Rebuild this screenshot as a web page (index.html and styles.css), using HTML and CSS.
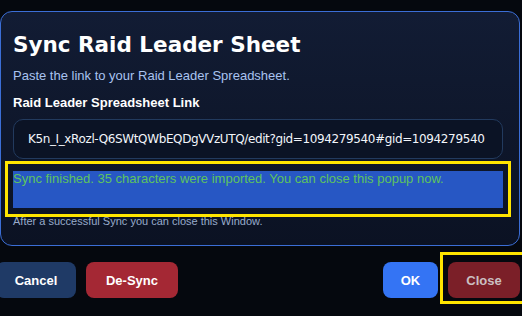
FILE: index.html
```html
<!DOCTYPE html>
<html>
<head>
<meta charset="utf-8">
<link rel="stylesheet" href="styles.css">
</head>
<body>
<div class="panel">
  <h1 class="title">Sync Raid Leader Sheet</h1>
  <p class="subtitle">Paste the link to your Raid Leader Spreadsheet.</p>
  <div class="label">Raid Leader Spreadsheet Link</div>
  <div class="input"><span class="input-text">K5n_I_xRozl-Q6SWtQWbEQDgVVzUTQ/edit?gid=1094279540#gid=1094279540</span></div>
  <div class="status hl">Sync finished. 35 characters were imported. You can close this popup now.</div>
  <div class="hint">After a successful Sync you can close this Window.</div>
</div>
<div class="actions">
  <div class="group">
    <button class="btn cancel">Cancel</button>
    <button class="btn desync">De-Sync</button>
  </div>
  <div class="group">
    <button class="btn ok">OK</button>
    <button class="btn close hl hl-close">Close</button>
  </div>
</div>
</body>
</html>
```
FILE: styles.css
```css
html, body {
  margin: 0;
  padding: 0;
  background: #05080e;
  width: 522px;
  height: 316px;
  overflow: hidden;
  font-family: "Liberation Sans", Arial, sans-serif;
}
.panel {
  box-sizing: border-box;
  margin-top: 11px;
  width: 520px;
  height: 235px;
  border: 1px solid #3b6ed6;
  border-radius: 12px;
  background: linear-gradient(180deg, #121c34 0%, #0b1223 100%);
  padding: 0 16px 0 12px;
}
.title {
  margin: 20px 0 0;
  font-family: "DejaVu Sans", Verdana, sans-serif;
  font-weight: bold;
  font-size: 21.5px;
  line-height: 26px;
  color: #ffffff;
}
.subtitle {
  margin: 10px 0 0;
  font-size: 13px;
  line-height: 16px;
  color: #a9c3f0;
}
.label {
  margin-top: 11px;
  font-size: 13px;
  line-height: 16px;
  font-weight: bold;
  color: #ffffff;
}
.input {
  box-sizing: border-box;
  margin-top: 7.5px;
  height: 40px;
  border: 1px solid #223a5e;
  border-radius: 10px;
  background: #0b1325;
  padding: 0 10px 0 14px;
  display: flex;
  align-items: center;
  overflow: hidden;
}
.input-text {
  font-family: "DejaVu Sans", Verdana, sans-serif;
  font-size: 12px;
  letter-spacing: -0.38px;
  color: #f2f5fa;
  white-space: nowrap;
}
.status {
  position: relative;
  margin-top: 12px;
  height: 37px;
  background: #2757c4;
  color: #5ec35f;
  font-size: 13px;
  line-height: 16px;
}
.hl::after {
  content: "";
  position: absolute;
  left: -8px;
  top: -10px;
  right: -8px;
  bottom: -9px;
  border: 3px solid #ffe500;
  pointer-events: none;
}
.hint {
  margin-top: 7.5px;
  font-size: 11px;
  line-height: 13px;
  color: #98abcb;
}
.actions {
  margin-top: 16px;
  margin-left: -4px;
  width: 524px;
  display: flex;
  justify-content: space-between;
}
.group {
  display: flex;
  gap: 10px;
}
.btn {
  position: relative;
  height: 36px;
  border: none;
  border-radius: 8px;
  padding: 0;
  font-family: "Liberation Sans", Arial, sans-serif;
  font-weight: bold;
  font-size: 13px;
  color: #ffffff;
}
.cancel { width: 80px; background: #1f3a66; }
.desync { width: 92px; background: #a42834; }
.ok { width: 55px; background: #3474f4; }
.close { width: 72px; background: #7b1f28; color: #cbbfc1; }
.hl-close::after { bottom: -6px; right: -10px; }
```
